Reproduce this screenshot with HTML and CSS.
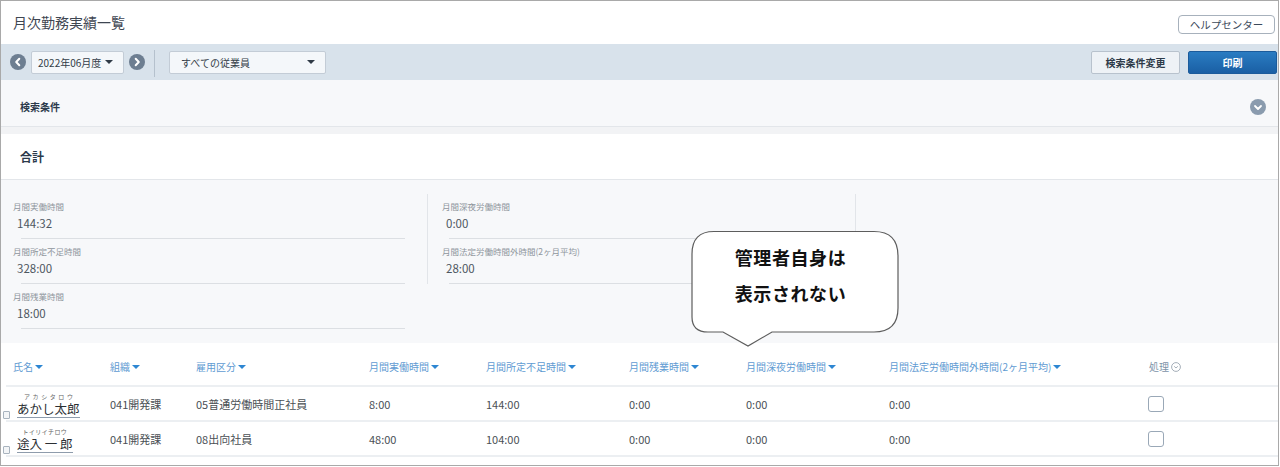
FILE: index.html
```html
<!DOCTYPE html>
<html lang="ja">
<head>
<meta charset="utf-8">
<title>月次勤務実績一覧</title>
<link rel="stylesheet" href="styles.css">
</head>
<body>
<div class="frame">
  <header class="titlebar">
    <h1 class="page-title">月次勤務実績一覧</h1>
    <button class="btn-help">ヘルプセンター</button>
  </header>

  <div class="toolbar">
    <div class="tb-group">
      <span class="circ-btn circ-prev"><svg width="16" height="16" viewBox="0 0 16 16"><circle cx="8" cy="8" r="8" fill="#6d7e91"/><polyline points="9.3,4.8 6.2,8 9.3,11.2" fill="none" stroke="#fff" stroke-width="2" stroke-linecap="round" stroke-linejoin="round"/></svg></span>
      <div class="select select-date"><span>2022年06月度</span><span class="caret-dark"></span></div>
      <span class="circ-btn circ-next"><svg width="16" height="16" viewBox="0 0 16 16"><circle cx="8" cy="8" r="8" fill="#6d7e91"/><polyline points="6.7,4.8 9.8,8 6.7,11.2" fill="none" stroke="#fff" stroke-width="2" stroke-linecap="round" stroke-linejoin="round"/></svg></span>
      <span class="tb-sep"></span>
      <div class="select select-emp"><span>すべての従業員</span><span class="caret-dark"></span></div>
    </div>
    <div class="tb-group tb-right">
      <button class="btn btn-neutral">検索条件変更</button>
      <button class="btn btn-brand">印刷</button>
    </div>
  </div>

  <div class="search-row">
    <span class="section-label">検索条件</span>
    <span class="circ-btn"><svg width="16" height="16" viewBox="0 0 16 16"><circle cx="8" cy="8" r="8" fill="#8a9bae"/><polyline points="5,7 8,10 11,7" fill="none" stroke="#fff" stroke-width="1.8" stroke-linecap="round" stroke-linejoin="round"/></svg></span>
  </div>
  <div class="band"></div>
  <div class="total-head">合計</div>

  <div class="summary">
    <div class="sum-col sum-col-a">
      <div class="sum-item"><div class="sum-label">月間実働時間</div><div class="sum-value">144:32</div></div>
      <div class="sum-rule"></div>
      <div class="sum-item"><div class="sum-label">月間所定不足時間</div><div class="sum-value">328:00</div></div>
      <div class="sum-rule"></div>
      <div class="sum-item"><div class="sum-label">月間残業時間</div><div class="sum-value">18:00</div></div>
      <div class="sum-rule"></div>
    </div>
    <div class="sum-col sum-col-b">
      <div class="sum-item"><div class="sum-label">月間深夜労働時間</div><div class="sum-value">0:00</div></div>
      <div class="sum-rule"></div>
      <div class="sum-item"><div class="sum-label">月間法定労働時間外時間(2ヶ月平均)</div><div class="sum-value">28:00</div></div>
      <div class="sum-rule"></div>
    </div>
    <div class="sum-col sum-col-c"></div>
  </div>

  <div class="list">
    <div class="lrow lhead">
      <div class="cell">氏名<span class="caret-blue"></span></div>
      <div class="cell">組織<span class="caret-blue"></span></div>
      <div class="cell">雇用区分<span class="caret-blue"></span></div>
      <div class="cell">月間実働時間<span class="caret-blue"></span></div>
      <div class="cell">月間所定不足時間<span class="caret-blue"></span></div>
      <div class="cell">月間残業時間<span class="caret-blue"></span></div>
      <div class="cell">月間深夜労働時間<span class="caret-blue"></span></div>
      <div class="cell">月間法定労働時間外時間(2ヶ月平均)<span class="caret-blue"></span></div>
      <div class="cell cell-act">処理<svg class="act-icon" width="10" height="10" viewBox="0 0 10 10"><circle cx="5" cy="5" r="4.4" fill="none" stroke="#9ba6b1" stroke-width="0.9"/><polyline points="3.2,4.3 5,6 6.8,4.3" fill="none" stroke="#9ba6b1" stroke-width="0.9"/></svg></div>
    </div>
    <div class="lrow">
      <div class="cell cell-name"><span class="row-icon"></span><span class="name"><span class="ruby">アカシタロウ</span><span class="kanji">あかし太郎</span></span></div>
      <div class="cell">041開発課</div>
      <div class="cell">05普通労働時間正社員</div>
      <div class="cell">8:00</div>
      <div class="cell">144:00</div>
      <div class="cell">0:00</div>
      <div class="cell">0:00</div>
      <div class="cell">0:00</div>
      <div class="cell cell-check"><span class="checkbox"></span></div>
    </div>
    <div class="lrow">
      <div class="cell cell-name"><span class="row-icon"></span><span class="name"><span class="ruby ruby-tight">トイリイチロウ</span><span class="kanji">途入 一 郎</span></span></div>
      <div class="cell">041開発課</div>
      <div class="cell">08出向社員</div>
      <div class="cell">48:00</div>
      <div class="cell">104:00</div>
      <div class="cell">0:00</div>
      <div class="cell">0:00</div>
      <div class="cell">0:00</div>
      <div class="cell cell-check"><span class="checkbox"></span></div>
    </div>
  </div>

  <div class="bubble">
    <svg class="bubble-shape" width="211" height="119" viewBox="0 0 211 119"><path d="M25 2.5 H185 Q209 2.5 209 27 V79 Q209 103 185 103 H83 L59 117 L34 103 H19 Q3 103 3 88 V25 Q3 2.5 25 2.5 Z" fill="#fff" stroke="#5d5d5d" stroke-width="1.2"/></svg>
    <p class="bubble-text">管理者自身は<br>表示されない</p>
  </div>
</div>
</body>
</html>
```

FILE: styles.css
```css
* { box-sizing: border-box; }
html, body { margin: 0; padding: 0; background: #fff; }
body {
  font-family: "Noto Sans CJK JP", "Noto Sans", sans-serif;
  color: #3e3e3c;
}
.frame {
  position: relative;
  width: 1279px;
  height: 466px;
  border: 1px solid #a9a9a9;
  overflow: hidden;
  background: #fff;
}

/* title bar */
.titlebar {
  height: 43px;
  display: flex;
  align-items: center;
  justify-content: space-between;
  padding: 0 3px 0 12px;
}
.page-title {
  margin: 0;
  font-size: 14px;
  font-weight: 400;
  color: #3e4652;
  line-height: 20px;
  padding-bottom: 2px;
}
.btn-help {
  width: 97px;
  height: 19px;
  margin-top: 3px;
  border: 1px solid #a7b1bc;
  border-radius: 4px;
  background: #fff;
  font-family: inherit;
  font-size: 10.5px;
  color: #3c4a5b;
  padding: 0;
  line-height: 17px;
}

/* toolbar */
.toolbar {
  height: 36px;
  background: #d8e2eb;
  display: flex;
  align-items: center;
  justify-content: space-between;
  padding: 0 1px 0 9px;
}
.tb-group { display: flex; align-items: center; }
.circ-btn { display: flex; width: 16px; height: 16px; }
.circ-btn svg { display: block; }
.select {
  height: 23px;
  display: flex;
  align-items: center;
  justify-content: space-between;
  background: #f4f7fa;
  border: 1px solid #c3ccd6;
  border-radius: 2px;
  font-size: 10px;
  color: #333d48;
}
.select-date { width: 93px; margin: 0 5px; padding: 0 10px 0 6px; }
.select-emp { width: 157px; padding: 0 10px 0 11px; }
.caret-dark {
  width: 0; height: 0;
  border-left: 4px solid transparent;
  border-right: 4px solid transparent;
  border-top: 4.5px solid #2f3a46;
}
.tb-sep {
  width: 1px;
  height: 27px;
  margin: 2px 14px 0 9px;
  background: #b5c1cd;
}
.tb-right { gap: 8px; }
.btn {
  width: 89px;
  height: 23px;
  border-radius: 2px;
  font-family: inherit;
  font-size: 10px;
  font-weight: 700;
  padding: 0;
}
.btn-neutral {
  background: #eef2f6;
  border: 1px solid #b8c2cd;
  color: #2d3a48;
}
.btn-brand {
  background: linear-gradient(#2a7cc2, #1a5fa4);
  border: 1px solid #1b5b9b;
  color: #fff;
}

/* search row */
.search-row {
  height: 47px;
  padding: 7px 12px 0 19px;
  display: flex;
  align-items: center;
  justify-content: space-between;
  background: #f7f8fa;
  border-bottom: 1px solid #e3e6ea;
}
.section-label {
  font-size: 10px;
  font-weight: 700;
  color: #2c3a4b;
}
.band { height: 7px; background: #f2f3f5; }
.total-head {
  height: 46px;
  padding-left: 19px;
  display: flex;
  align-items: center;
  font-size: 12px;
  font-weight: 700;
  color: #2c3a4b;
  border-bottom: 1px solid #e3e6ea;
}

/* summary */
.summary {
  height: 163px;
  background: #f7f8fa;
  display: flex;
  align-items: flex-start;
  padding-top: 14px;
}
.sum-col-a { width: 426px; padding-left: 12px; }
.sum-col-b { width: 428px; border-left: 1px solid #e2e5e9; padding-left: 14px; }
.sum-col-c { flex: 1; height: 89px; border-left: 1px solid #e2e5e9; }
.sum-item { padding: 6px 0 7px; }
.sum-label {
  font-size: 8.5px;
  line-height: 12px;
  color: #8e959c;
}
.sum-value {
  margin-top: 3px;
  padding-left: 4px;
  font-size: 11.5px;
  line-height: 16px;
  color: #4d5660;
}
.sum-rule {
  height: 1px;
  background: #dcdfe3;
  margin-left: 8px;
  margin-right: 22px;
}
.sum-col-b .sum-rule { margin-left: 7px; }

/* list */
.list { margin-left: 5px; width: 1272px; }
.lrow {
  display: grid;
  grid-template-columns: 97px 86px 173px 117px 143px 117px 143px 260px 136px;
  height: 35px;
  border-bottom: 2px solid #eceff2;
  align-items: center;
  font-size: 11px;
  color: #4a4f55;
}
.lhead {
  height: 44px;
  align-items: end;
  padding-bottom: 11px;
  font-size: 10px;
  color: #5f9bd2;
}
.cell { padding-left: 7px; white-space: nowrap; display: flex; align-items: center; }
.caret-blue {
  width: 0; height: 0;
  margin-left: 2px;
  border-left: 4px solid transparent;
  border-right: 4px solid transparent;
  border-top: 4.5px solid #2d86d2;
}
.cell-act { color: #7c92a8; }
.act-icon { margin-left: 2px; display: block; }
.cell-name {
  padding-left: 0;
  align-self: stretch;
  align-items: center;
  gap: 7px;
}
.row-icon {
  align-self: flex-end;
  margin: 0 0 1px -3px;
  width: 7px;
  height: 8px;
  border: 1px solid #a8b3be;
  border-radius: 1px;
  background: #f3f5f7;
}
.name {
  display: flex;
  flex-direction: column;
  align-items: center;
  border-bottom: 1px solid #8e9cac;
  margin-top: 3px;
}
.ruby {
  font-size: 6px;
  line-height: 8px;
  letter-spacing: 2.6px;
  color: #666;
  padding-left: 3px;
}
.ruby-tight { letter-spacing: 0.4px; padding-left: 0; }
.kanji {
  font-size: 12.5px;
  line-height: 16px;
  color: #2b2f33;
}
.cell-check { padding-left: 6px; }
.checkbox {
  width: 16px;
  height: 16px;
  border: 1px solid #9aa8b7;
  border-radius: 3px;
  background: #fff;
}

/* speech bubble overlay */
.bubble {
  position: absolute;
  left: 688px;
  top: 228px;
  width: 211px;
  height: 119px;
}
.bubble-shape { position: absolute; left: 0; top: 0; }
.bubble-text {
  position: relative;
  margin: 0;
  padding: 10px 8px 0 0;
  text-align: center;
  font-size: 18px;
  line-height: 36px;
  font-weight: 700;
  letter-spacing: 0.6px;
  color: #111;
}
```
